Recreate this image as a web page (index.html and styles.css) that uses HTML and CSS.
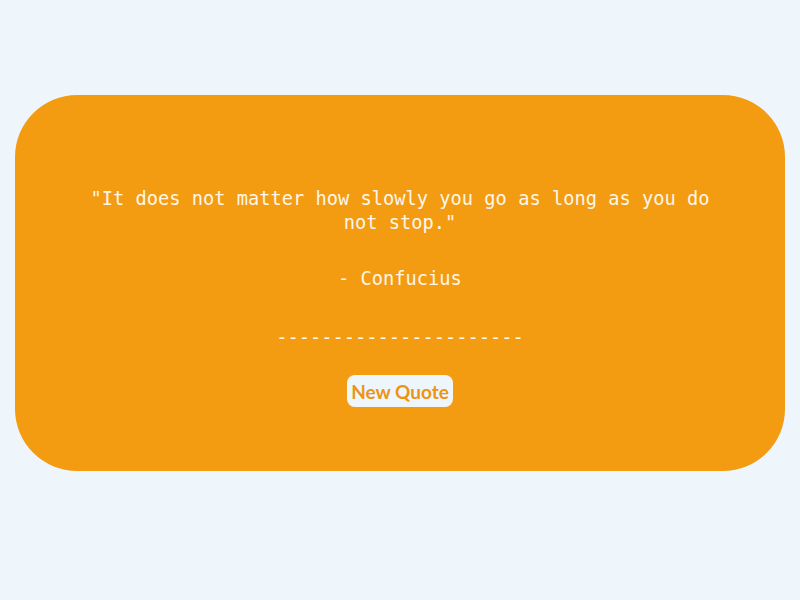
FILE: index.html
```html
<!DOCTYPE html>
<html lang="en">
<head>
<meta charset="utf-8">
<title>Quote</title>
<link rel="stylesheet" href="styles.css">
</head>
<body>
  <main class="card">
    <p class="quote">"It does not matter how slowly you go as long as you do not stop."</p>
    <p class="author">- Confucius</p>
    <p class="divider">----------------------</p>
    <button class="btn">New Quote</button>
  </main>
</body>
</html>
```

FILE: styles.css
```css
html, body {
  margin: 0;
  padding: 0;
}
body {
  background: #eef6fc;
  width: 800px;
  height: 600px;
  overflow: hidden;
}
.card {
  margin: 95px 15px 0;
  height: 376px;
  box-sizing: border-box;
  padding: 92px 60px 0;
  background: #f39c12;
  border-radius: 62px;
  display: flex;
  flex-direction: column;
  align-items: center;
  text-align: center;
  color: #fdf6ea;
  font-family: "DejaVu Sans Mono", monospace;
  font-size: 18.7px;
  line-height: 24px;
}
.quote {
  margin: 0;
}
.author {
  margin: 32px 0 0;
}
.divider {
  margin: 35px 0 0;
}
.btn {
  margin-top: 25px;
  height: 32px;
  padding: 0 4px;
  border: none;
  border-radius: 8px;
  background: #eef6fc;
  color: #ec9414;
  font-family: Lato, "Open Sans", sans-serif;
  font-weight: bold;
  font-size: 19px;
  cursor: pointer;
}
```
